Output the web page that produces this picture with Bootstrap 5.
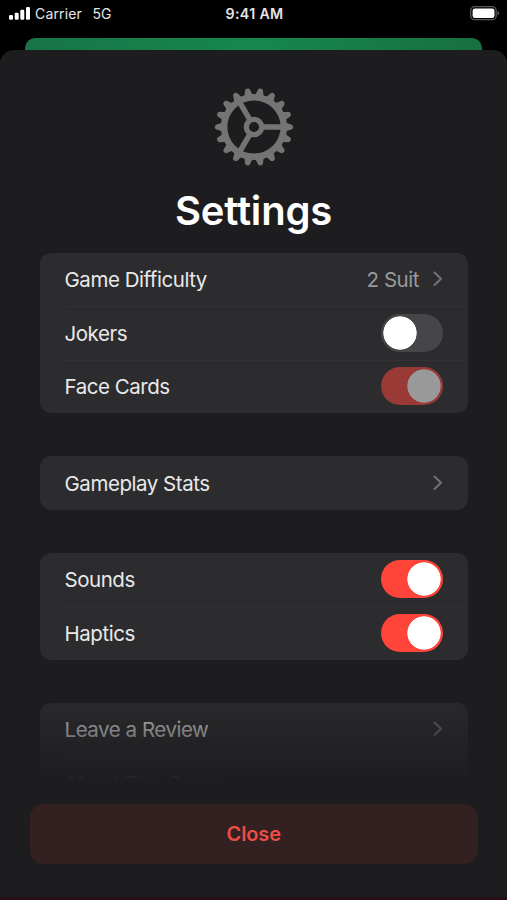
<!DOCTYPE html>
<html lang="en" data-bs-theme="dark">
<head>
<meta charset="utf-8">
<meta name="viewport" content="width=device-width, initial-scale=1">
<title>Settings</title>
<link href="https://cdn.jsdelivr.net/npm/bootstrap@5.3.0/dist/css/bootstrap.min.css" rel="stylesheet">
<style>
body{background:#000;font-family:Inter,"Liberation Sans",sans-serif;color:#e9e9ea}
.screen{height:900px;overflow:hidden}
.status{height:38px;font-size:14px;padding:5px 7px 0 9px;line-height:18px;color:#e6e6e6}
.status .side{width:200px}
.carrier{letter-spacing:.15px}
.net{margin-left:10.5px}
.clock{letter-spacing:.35px;font-size:14.2px}
.felt{height:12px;margin:0 25px;border-radius:10px 10px 0 0;background:linear-gradient(90deg,#177446,#17874d 50%,#17703f)}
.sheet{height:850px;background:#1d1d1f;border-radius:14px 14px 0 0;padding-top:37px}
.title{font-size:40px;font-weight:600;line-height:48px;letter-spacing:-.2px;color:#fff;margin:20px 0 17.5px}
.options{height:551.5px;padding:0 39.5px;overflow:hidden;position:relative}
.group{--bs-list-group-bg:#2c2c2e;--bs-list-group-border-radius:11px;margin-bottom:43px;background:#2c2c2e;border-radius:11px}
.group .list-group-item{height:53.5px;padding:0 24.5px 0 25px;border:0;font-size:20.5px;letter-spacing:-.46px;color:#e9e9ea;background:transparent}
.group .list-group-item+.list-group-item{background:linear-gradient(#333335,#333335) 25px 0/100% 1px no-repeat}
.group .list-group-item>span:not(.form-switch){padding-top:3px}
.value{color:#99999c;margin-right:13px}
.chev{stroke:#727276}
.form-switch .toggle.form-check-input{width:62.5px;height:38px;margin:0;border:0;border-radius:19px;background:#464649;box-shadow:none;appearance:none}
.form-switch .toggle.form-check-input{background-image:radial-gradient(circle,#fff 16.3px,transparent 17px);background-size:38px 38px;background-repeat:no-repeat;background-position:0 0}
.form-switch .toggle:checked.form-check-input{background-color:#ff443a;background-position:24.5px 0}
.form-switch .toggle:disabled.form-check-input{opacity:1;background-color:#993a36;background-image:radial-gradient(circle,#999 16.3px,transparent 17px)}
.form-switch .toggle:not(:checked).form-check-input{width:62px}
.fade-out{position:absolute;left:0;right:0;bottom:0;height:124px;background:linear-gradient(rgba(29,29,31,0),#1d1d1f 101px)}
.close-btn{height:59.5px;margin:0 29.5px 0 30px;border-radius:14px;background:#332021;color:#ec4d45;font-size:20px;font-weight:600;letter-spacing:-.1px;border:0}
.edge{height:3px;background:#250f13}
</style>
<script src="https://cdn.jsdelivr.net/npm/bootstrap@5.3.0/dist/js/bootstrap.bundle.min.js"></script>
</head>
<body>
<div class="screen d-flex flex-column">
  <header class="status d-flex justify-content-between align-items-start">
    <div class="side d-flex">
      <svg width="22" height="15" viewBox="0 0 22 15" fill="#fff"><rect x="0" y="10" width="4" height="4.700" rx="1.200"/><rect x="5.700" y="7.700" width="4" height="7" rx="1.200"/><rect x="11.300" y="4.700" width="4" height="10" rx="1.200"/><rect x="17" y="2" width="4" height="12.700" rx="1.200"/></svg>
      <span class="carrier ms-1">Carrier</span><span class="net">5G</span>
    </div>
    <strong class="clock fw-semibold">9:41 AM</strong>
    <div class="side text-end lh-1">
      <svg width="30" height="16" viewBox="0 0 30 16"><rect x=".7" y="1.700" width="25.500" height="13" rx="4" fill="none" stroke="#59595b" stroke-width="1.300"/><rect x="2.600" y="3.500" width="21.900" height="9.600" rx="2.300" fill="#fff"/><path d="M27.500 6q1.700.5 1.700 2.300T27.500 10.500z" fill="#59595b"/></svg>
    </div>
  </header>
  <div class="felt flex-shrink-0"></div>
  <main class="sheet flex-shrink-0 d-flex flex-column">
    <svg class="mx-auto flex-shrink-0" width="80" height="80" viewBox="-40 -40 80 80">
      <defs><path id="tooth" d="M31-4.400C33-4.200 33.800-3.500 35-3.200L37.300-2.600C39.700-1.900 39.700 1.900 37.300 2.600L35 3.200C33.800 3.500 33 4.200 31 4.400z"/></defs>
      <g id="gear" fill="#747475"><circle r="29.800" fill="none" stroke="#747475" stroke-width="6.400"/><circle r="7.700" fill="none" stroke="#747475" stroke-width="5.300"/>
      <path d="M9 0H28M-4.500-7.800L-14-24.200M-4.500 7.800L-14 24.200" stroke="#747475" stroke-width="5.500"/></g>
    </svg>
    <h1 class="title text-center">Settings</h1>
    <div class="options flex-shrink-0">
      <div class="list-group group">
        <div class="list-group-item d-flex align-items-center"><span class="me-auto">Game Difficulty</span><span class="value">2 Suit</span><svg class="chev" width="11" height="16" viewBox="0 0 11 16" fill="none" stroke-width="2.100" stroke-linecap="round" stroke-linejoin="round"><path d="M2.500 1.500L9 7.800 2.500 14"/></svg></div>
        <label class="list-group-item d-flex align-items-center"><span class="me-auto">Jokers</span><span class="form-switch p-0 d-flex"><input class="form-check-input toggle" type="checkbox" role="switch"></span></label>
        <label class="list-group-item d-flex align-items-center"><span class="me-auto">Face Cards</span><span class="form-switch p-0 d-flex"><input class="form-check-input toggle" type="checkbox" role="switch" checked disabled></span></label>
      </div>
      <div class="list-group group">
        <div class="list-group-item d-flex align-items-center"><span class="me-auto">Gameplay Stats</span><svg class="chev" width="11" height="16" viewBox="0 0 11 16" fill="none" stroke-width="2.100" stroke-linecap="round" stroke-linejoin="round"><path d="M2.500 1.500L9 7.800 2.500 14"/></svg></div>
      </div>
      <div class="list-group group">
        <label class="list-group-item d-flex align-items-center"><span class="me-auto">Sounds</span><span class="form-switch p-0 d-flex"><input class="form-check-input toggle" type="checkbox" role="switch" checked></span></label>
        <label class="list-group-item d-flex align-items-center"><span class="me-auto">Haptics</span><span class="form-switch p-0 d-flex"><input class="form-check-input toggle" type="checkbox" role="switch" checked></span></label>
      </div>
      <div class="list-group group">
        <div class="list-group-item d-flex align-items-center"><span class="me-auto">Leave a Review</span><svg class="chev" width="11" height="16" viewBox="0 0 11 16" fill="none" stroke-width="2.100" stroke-linecap="round" stroke-linejoin="round"><path d="M2.500 1.500L9 7.800 2.500 14"/></svg></div>
        <div class="list-group-item d-flex align-items-center"><span class="me-auto">About The Game</span></div>
      </div>
      <div class="fade-out"></div>
    </div>
    <button type="button" class="btn close-btn">Close</button>
    <div class="edge mt-auto"></div>
  </main>
</div>
<script>
const gear = document.getElementById('gear');
for (let a = 0; a < 360; a += 20) {
  const tooth = document.createElementNS('http://www.w3.org/2000/svg', 'use');
  tooth.setAttribute('href', '#tooth');
  tooth.setAttribute('transform', `rotate(${a})`);
  gear.append(tooth);
}
</script>
</body>
</html>
